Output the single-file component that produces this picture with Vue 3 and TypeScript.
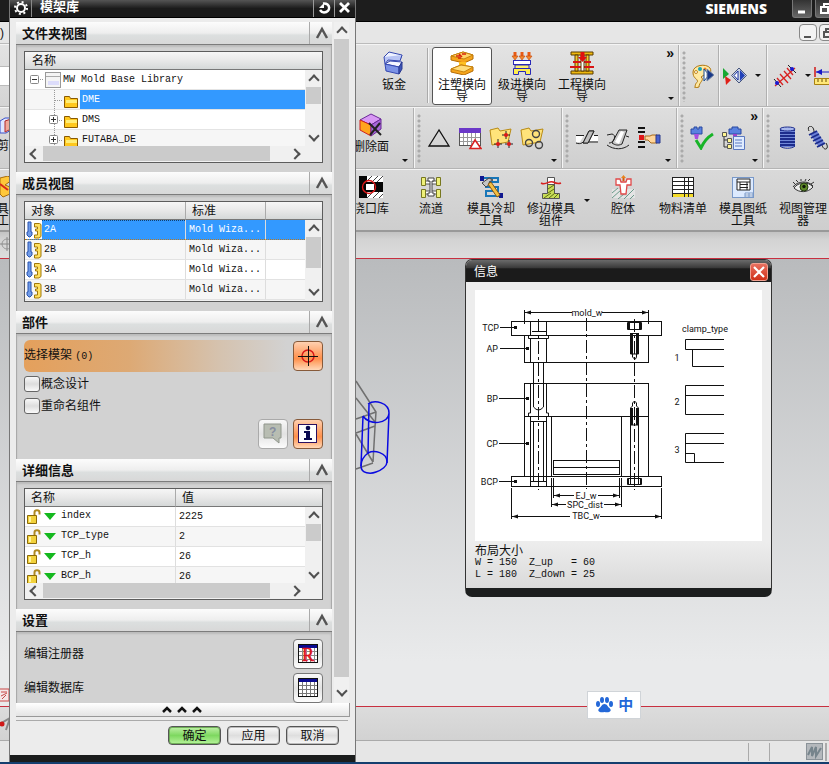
<script setup lang="ts">
import { ref } from 'vue'

interface Tool { icon: string; label: string; active?: boolean }
interface Member { name: string; standard: string }
interface Detail { name: string; value: string }

const icons: Record<string, string> = {
  sheet: '<path d="M2 6 7 1l13 3-2 5-14-2z" fill="#eef2ff" stroke="#3548b0"/><path d="M2 6l1 7 3-4 12 1 2-6" fill="#b8c4f4" stroke="#3548b0"/><path d="M3 13l5-3 12 1-3 5z" fill="#f4f6ff" stroke="#3548b0"/><path d="M3 13l14 3v7L4 20z" fill="#7b92e6" stroke="#3548b0"/><path d="M17 16l3-5v7l-3 5z" fill="#3d55b8" stroke="#2a3a90"/>',
  mold: '<path d="M1 5 13 1l10 3v4l-9 4-13-3z" fill="#f6a51c" stroke="#b46c08"/><path d="M1 5 13 1l10 3-9 4z" fill="#ffd568" stroke="#c8820c"/><path d="M6 5h5M9 3l3 3M8 7h3M12 3h4" stroke="#d8250c" stroke-width="1.6"/><path d="M9 11h7v4H9z" fill="#ffc021"/><path d="M1 18l10-4 12 2v4l-9 4-13-3z" fill="#f6a51c" stroke="#b46c08"/><path d="M1 18l10-4 12 2-9 5z" fill="#ffdc78" stroke="#c8820c"/>',
  prog: '<path d="M5 1v5M12 1v5M19 1v5" stroke="#e85a14" stroke-width="3"/><path d="M2 5h6l-3 4zM9 5h6l-3 4zM16 5h6l-3 4z" fill="#f58a2c" stroke="#c04008" stroke-width=".6"/><rect x="3.500" y="9.500" width="17" height="4" fill="#fff" stroke="#2a2ab8"/><path d="M5 14h14v4H5z" fill="#fff26a" stroke="#2a2ab8"/><path d="M3.500 23.500v-6h17v6h-5v-3h-7v3z" fill="#ffee50" stroke="#2a2ab8"/>',
  eng: '<path d="M1 1h22v3H1zM1 20h22v3H1z" fill="#efb90f" stroke="#5a3c00"/><path d="M5 4h3v16H5zM16 4h3v16h-3z" fill="#f5ca2c" stroke="#5a3c00"/><path d="M3 11h18M0 16h24" stroke="#d81414" stroke-width="2"/><path d="M11 4h3v16h-3z" fill="#fff" stroke="#5a3c00"/><path d="M12.500 1v7" stroke="#e01010" stroke-width="4"/><path d="M8 6h9l-4.500 5z" fill="#e01010"/>',
  palette: '<path d="M2 8C2 1 15-1 19 4c3 5-3 8-6 7l-3 2c4 3-2 5-2 10l-4 1c0-7 4-5 2-8-1-2-4-2-4-8z" fill="#ffe9a3" stroke="#b07810"/><circle cx="9" cy="5" r="2" fill="#17a5b5"/><circle cx="5" cy="8" r="1.500" fill="#fff" stroke="#c08820"/><circle cx="14" cy="5" r="1.500" fill="#e88020"/><path d="M13 5l5 6-5 6z" fill="#fff" stroke="#174a8c"/><path d="M16 5l7 6-7 6z" fill="#183888" stroke="#7b8ba8"/>',
  arrows: '<path d="M0 4l6 6-6 5z" fill="#18a832"/><path d="M2 12l6 4-5 5z" fill="#e02018"/><path d="M16 4l7.500 7.500L16 19l-7.500-7.500z" fill="#c8d0e0" stroke="#46557c"/><path d="M15 7v9l-4-4.500z" fill="#fff" stroke="#1830a0"/><path d="M17 6l5 5.500-5 5.500z" fill="#2040b8"/>',
  measure: '<path d="M2 22 22 4M7 10l8 9M11 7l7 8M4 14l6 7M14 4l6 7" stroke="#d82020" stroke-width="1.300"/><path d="M1 15l7 8M15 1l8 8" stroke="#222"/><circle cx="4" cy="19" r="2" fill="#1818d0"/><circle cx="19" cy="5" r="2" fill="#1818d0"/>',
  ruler: '<path d="M1 3v10" stroke="#d01818" stroke-width="1.500"/><path d="M2 8h22" stroke="#1818c8"/><path d="M2 8l6-3v6z" fill="#1818c8"/><path d="M.500 14.500h23v6H.500z" fill="#ffe878" stroke="#a88010"/><path d="M4 15v3M8 15v3M12 15v3M16 15v3M20 15v3" stroke="#6b5000"/>',
  delface: '<path d="M1 7 12 1l10 5-10 6z" fill="#d898f4" stroke="#6a2898"/><path d="M1 7v10l11 6V12z" fill="#ffa41c" stroke="#d02020"/><path d="M12 12l10-6v10l-10 7z" fill="#a868d8" stroke="#6a2898"/><path d="M10 10l12 12M21 10 11 22" stroke="#222" stroke-width="2"/>',
  triangle: '<path d="M12 4 2 20h20z" fill="none" stroke="#111" stroke-width="1.300"/>',
  tabletri: '<rect x="1.500" y="2.500" width="21" height="17" fill="#fff" stroke="#555"/><path d="M1 2h22v5H1z" fill="#6b38c8"/><path d="M2 11.500h20M2 15.500h20M5.500 7v12M9.500 7v12M13.500 7v12M17.500 7v12" stroke="#999"/><path d="M17 14l-5 8.500h11z" fill="#fff" stroke="#d82020" stroke-width="1.500"/>',
  foldplus: '<path d="M1 4l8-2 2 3 11-2-3 13-16 3z" fill="#ffe37a" stroke="#b88a14"/><path d="M17 5v8M13 9h8M9 13v9M5 18h8M20 14v8M16 18h8" stroke="#222"/><circle cx="17" cy="9" r="2" fill="#e01818"/><circle cx="9" cy="18" r="2" fill="#e01818"/><circle cx="20" cy="18" r="2" fill="#e01818"/>',
  foldring: '<path d="M1 4l8-2 2 3 12-2-3 13-17 3z" fill="#ffe37a" stroke="#b88a14"/><g fill="none" stroke="#444" stroke-width="1.400"><circle cx="16" cy="8" r="3.500"/><circle cx="9" cy="17" r="3.500"/><circle cx="19" cy="19" r="3.500"/></g>',
  surf1: '<path d="M1 9h8l-4 7H1zM16 9h7v6h-9z" fill="#fff"/><path d="M1 9.500h8M19 9.500h4M1 17c5 2 8-1 9-4l4-8h5l-6 12H8" fill="none" stroke="#222"/><path d="M14 5h5l-6 12H8z" fill="#c0c0c0" stroke="#222"/><path d="M14 16h9" stroke="#222"/>',
  surf2: '<path d="M1 19c7 5 16 5 22 0" fill="none" stroke="#222"/><path d="M6 17 13 4h8l-5 14c-4 2-7 1-10-1z" fill="#c8c8c8" stroke="#222"/><path d="M9 16l6-11 3 1-5 12z" fill="#fff"/><path d="M1 9l5-1c5 1 2 9-3 9M20 10l3 1" fill="none" stroke="#222"/>',
  hand: '<path d="M1 2h7M1 6h7M1 16h7M1 21h7" stroke="#111" stroke-width="2"/><path d="M2 9h5v5H2z" fill="#e01818"/><path d="M8 10h5l2-1h5v8h-6l-3-3H8z" fill="#ffd59a" stroke="#a86818"/><path d="M19 9h4v8h-4z" fill="#4b62d0" stroke="#28388a"/>',
  check: '<path d="M1 3h3V1h3v2h2V1h3v7H1z" fill="#5a82e0" stroke="#2848a0"/><path d="M4 8h5l-1 5H5z" fill="#a850e0"/><path d="M6 14l5 8C14 15 18 11 23 8" fill="none" stroke="#18b428" stroke-width="3"/>',
  tree: '<path d="M8 3h3V1h6v2h3v5H8z" fill="#5a82e0" stroke="#2848a0"/><path d="M12 8h4v4h-4z" fill="#a040c8"/><path d="M3 9v12h4M3 14h4" fill="none" stroke="#333"/><path d="M1.500 6.500h4v4h-4zM6.500 12.500h4v4h-4zM6.500 18.500h4v4h-4z" fill="#fff690" stroke="#555"/><path d="M12.500 10.500h11v13h-11z" fill="#e0ecff" stroke="#5a78c0"/><path d="M14 14h7M14 17h7M14 20h7" stroke="#5a78c0"/>',
  spring: '<path d="M5 3h15v18H5z" fill="#7188d8"/><path d="M5 4h15M5 7h15M5 10h15M5 13h15M5 16h15M5 19h15" stroke="#1c2c8c" stroke-width="1.800"/><ellipse cx="12.500" cy="3" rx="7.500" ry="2" fill="#a8b8ec" stroke="#1c2c8c"/><path d="M5 20c3 3 12 3 15 0" fill="none" stroke="#1c2c8c"/>',
  spring2: '<path d="M9 6C9-2 1-1 4 5M17 19c2 7 8 4 4-2" fill="none" stroke="#222"/><path d="M5 8l7-3 8 13-6 3z" fill="#6b80d8"/><path d="M4 9l8-4M6 12l8-4M8 15l8-4M10 18l8-4M12 21l8-4" stroke="#1c2c8c" stroke-width="1.800"/>',
  gate: '<path d="M0 1h8v22H0zM8 7h16v10H8z" fill="#050505"/><path d="M8 1h16v6H8zM8 17h16v6H8z" fill="#fff"/><path d="M8 6l5-5M13 7l6-6M18 7l6-6M8 23l6-6M14 23l6-6M20 23l4-4" stroke="#444"/><path d="M7 9h8v6H7z" fill="#fff"/><circle cx="10" cy="12" r="6.500" fill="none" stroke="#e01818" stroke-width="1.400"/>',
  runner: '<path d="M4 6h16v3H4zM4 16h16v3H4z" fill="#fff" stroke="#555"/><path d="M9 3h6v3h-2v12h2v3H9v-3h2V6H9z" fill="#fff" stroke="#444"/><path d="M2.500 2.500h4v8h-4zM17.500 2.500h4v8h-4zM2.500 14.500h4v8h-4zM17.500 14.500h4v8h-4z" fill="#eef07a" stroke="#777720"/>',
  cool: '<path d="M3 3h16v4H7v5h12v4H7v5h13" fill="none" stroke="#1876b8" stroke-width="2"/><path d="M1 1h4v5H1zM20 18h4v5h-4z" fill="#101890"/><path d="M3 8l7-5 4 2-4 2 1 2-4 3z" fill="#c4c4c4" stroke="#444"/><path d="M9 9l3-2 9 13-3 2z" fill="#f4bf42" stroke="#875810"/>',
  trim: '<path d="M8.500 2.500h7v8h-7z" fill="#fff" stroke="#555"/><path d="M8.500 9.500h7v9h5v5h-17v-5h5z" fill="#c8dc58" stroke="#555"/><path d="M9 14l6-4M9 18l6-4M5 23l7-5M10 23l6-5M15 23l4-4" stroke="#5b6b10"/><path d="M2 8c5 3 8-3 12-1s6 2 8 1" fill="none" stroke="#d82020" stroke-width="1.500"/>',
  cavity: '<path d="M1 14h8v7h7v-7h8v9H1z" fill="#e4e4e4"/><path d="M1 18l6-5M1 23l9-8M7 24l6-5M13 24l10-10M19 24l4-4" stroke="#6a9a8a"/><path d="M5 4h4l1 3h5l1-3h4v6h-4l-1 9h-5l-1-9H5z" fill="#fff" stroke="#e04848" stroke-width="1.300"/><path d="M12.500 6V2" stroke="#d85a10" stroke-width="2"/><path d="M10 3h5l-2.500-3z" fill="#e8821c"/>',
  bom: '<rect x="1.500" y="2.500" width="21" height="19" fill="#fff" stroke="#222"/><path d="M2 18h20v4H2z" fill="#f5dc28"/><path d="M2 6.500h20M2 10.500h20M2 14.500h20M2 18.500h20M13.500 3v19M17.500 3v19" stroke="#222"/>',
  drawing: '<rect x="1.500" y="2.500" width="21" height="20" fill="#dceaff" stroke="#7898c8"/><path d="M6 4h13v11H6z" fill="#fff" stroke="#222"/><path d="M6 7h13M9 9.500h8M9 12.500h8M9 7v8M16 7v8" stroke="#222"/><path d="M14 18h8v4h-8zM14 20h8M18 18v4" fill="#fff" stroke="#7898c8"/>',
  eye: '<path d="M3 13C7 7 17 6 22 12c-5 6-14 6-19 1z" fill="#eee" stroke="#333"/><circle cx="13" cy="12" r="4" fill="#5f8a28" stroke="#253c10"/><circle cx="13" cy="11.500" r="1.700" fill="#101a08"/><path d="M2 12C6 6 17 5 22 11M4 9 2 7M7 7 5 5M10 6V4M14 6l1-2M17 6l2-2M20 9l3-2" fill="none" stroke="#333"/>',
}

const wizardTools: Tool[] = [
  { icon: 'mold', label: '注塑模向导', active: true },
  { icon: 'prog', label: '级进模向导' },
  { icon: 'eng', label: '工程模向导' },
]
const moldLeft: Tool[] = [
  { icon: 'gate', label: '浇口库' },
  { icon: 'runner', label: '流道' },
  { icon: 'cool', label: '模具冷却工具' },
  { icon: 'trim', label: '修边模具组件' },
]
const moldRight: Tool[] = [
  { icon: 'cavity', label: '腔体' },
  { icon: 'bom', label: '物料清单' },
  { icon: 'drawing', label: '模具图纸工具' },
  { icon: 'eye', label: '视图管理器' },
]
const folders = ['DME', 'DMS', 'FUTABA_DE']
const selectedFolder = ref('DME')
const members: Member[] = ['2A', '2B', '3A', '3B'].map((name) => ({ name, standard: 'Mold Wiza...' }))
const selectedMember = ref('2A')
const details: Detail[] = [
  { name: 'index', value: '2225' },
  { name: 'TCP_type', value: '2' },
  { name: 'TCP_h', value: '26' },
  { name: 'BCP_h', value: '26' },
]
const concept = ref(false)
const rename = ref(false)
</script>

<template>
  <div class="desktop">
    <header class="titlebar">
      <span class="brand">SIEMENS</span>
      <button class="winbtn" aria-label="最小化"><svg width="20" height="18"><path d="M5 12h7" stroke="#fff" stroke-width="3" /></svg></button>
      <button class="winbtn" aria-label="还原"><svg width="20" height="18"><path d="M8 7V4h8v7h-3M5 7h7v6H5z" fill="none" stroke="#fff" stroke-width="2" /></svg></button>
    </header>
    <div class="menubar">
      <span class="fragment">)</span>
      <button class="mdibtn" aria-label="最小化"><svg width="16" height="16"><path d="M4 12h7" stroke="#555" stroke-width="2" /></svg></button>
      <button class="mdibtn" aria-label="还原"><svg width="16" height="16"><path d="M6 6V4h7v6M4 7h6v5H4z" fill="none" stroke="#555" stroke-width="2" /></svg></button>
    </div>

    <div class="ribbon top">
      <div class="under wide"><div class="fieldstub"></div></div>
      <button class="tool"><svg viewBox="0 0 24 24" v-html="icons.sheet"></svg><span>钣金</span></button>
      <i class="vsep"></i>
      <button v-for="t in wizardTools" :key="t.icon" class="tool" :class="{ active: t.active }">
        <svg viewBox="0 0 24 24" v-html="icons[t.icon]"></svg><span>{{ t.label }}</span>
      </button>
      <div class="overflow w66"><b>»</b><i class="caret"></i></div>
      <i class="edge"></i><i class="grip"></i>
      <button class="mini w30"><svg viewBox="0 0 24 24" v-html="icons.palette"></svg></button>
      <i class="edge"></i>
      <button class="mini w30"><svg viewBox="0 0 24 24" v-html="icons.arrows"></svg></button>
      <i class="drop"><i class="caret"></i></i>
      <i class="edge"></i>
      <button class="mini w34"><svg viewBox="0 0 24 24" v-html="icons.measure"></svg></button>
      <i class="drop narrow"><i class="caret"></i></i>
      <button class="mini w24"><svg viewBox="0 0 24 24" v-html="icons.ruler"></svg></button>
    </div>

    <div class="ribbon mid">
      <div class="under near">
        <svg width="12" height="18"><path d="M0 4l5-3 6 0v12l-5 3H0z" fill="#dfe6ff" stroke="#3a50c8" /><path d="M5 4l6-2v10l-6 3z" fill="#f0a898" stroke="#b02828" /></svg>
        <span class="fragment">剪</span>
      </div>
      <button class="tool"><svg viewBox="0 0 24 24" v-html="icons.delface"></svg><span>删除面</span></button>
      <div class="overflow w12"><i class="caret"></i></div>
      <i class="edge"></i><i class="grip"></i>
      <button v-for="n in ['triangle', 'tabletri', 'foldplus', 'foldring']" :key="n" class="mini"><svg viewBox="0 0 24 24" v-html="icons[n]"></svg></button>
      <div class="overflow w14"><i class="caret"></i></div>
      <i class="edge"></i><i class="grip"></i>
      <button v-for="n in ['surf1', 'surf2', 'hand']" :key="n" class="mini"><svg viewBox="0 0 24 24" v-html="icons[n]"></svg></button>
      <div class="overflow w12"><i class="caret"></i></div>
      <i class="edge"></i><i class="grip"></i>
      <button v-for="n in ['check', 'tree']" :key="n" class="mini"><svg viewBox="0 0 24 24" v-html="icons[n]"></svg></button>
      <div class="overflow w14"><b>»</b><i class="caret"></i></div>
      <i class="edge"></i><i class="grip"></i>
      <button v-for="n in ['spring', 'spring2']" :key="n" class="mini w30"><svg viewBox="0 0 24 24" v-html="icons[n]"></svg></button>
    </div>

    <div class="ribbon low">
      <div class="under near">
        <svg width="14" height="22"><path d="M0 2l8-2 4 4-7 5 5 2v7l-7 3-3-3z" fill="#ffc83a" stroke="#a86c0c" /><path d="M0 8l8 6" stroke="#d82818" stroke-width="2" /></svg>
        <span class="fragment">具<br />工</span>
      </div>
      <button v-for="t in moldLeft" :key="t.icon" class="tool"><svg viewBox="0 0 24 24" v-html="icons[t.icon]"></svg><span>{{ t.label }}</span></button>
      <i class="drop"><i class="caret"></i></i>
      <button v-for="t in moldRight" :key="t.icon" class="tool"><svg viewBox="0 0 24 24" v-html="icons[t.icon]"></svg><span>{{ t.label }}</span></button>
    </div>
    <div class="selectbar">
      <svg width="14" height="14"><circle cx="7" cy="7" r="5" fill="none" stroke="#999" /><path d="M7 0v14M0 7h14" stroke="#888" /></svg>
    </div>

    <main class="viewport">
      <svg class="stampmark" width="14" height="14"><rect x="-3" y="1" width="12" height="12" fill="#f5e8e8" stroke="#c84848" /><path d="M1 4h6M1 8l6-3M2 11l4-4" stroke="#c84848" /></svg>
    </main>
    <svg class="wire" width="44" height="110" viewBox="355 375 44 110" fill="none">
      <g stroke="#707070" stroke-width="1.500"><path d="M356 381l20 31-1 15-2 35M356 398l19 24M356 419l20-7M356 433l19-7M356 434l17 28M356 469l17-6" /></g>
      <g stroke="#0a0ae0" stroke-width="1.500"><path d="M368 404c7-5 21-1 21 9 0 11-20 13-26 3M389 413l-2 50M363 416l-2 50M369 404l-1 50" /><path d="M361 466c0 8 10 8 15 6 6-2 11-6 11-10 0-10-13-12-19-9-4 3-7 8-7 13z" /></g>
    </svg>
    <div class="statusbar">
      <svg width="12" height="18"><path d="M0 9l10-6-4 12" fill="none" stroke="#888" stroke-width="2" /><circle cx="2" cy="9" r="2.500" fill="#d01818" /></svg>
    </div>
    <footer class="footer">
      <i></i><i></i>
      <svg width="17" height="17"><rect x=".5" y=".5" width="16" height="16" fill="#b4b8bc" stroke="#8a9298" /><path d="M2 12l4-8v9l4-9v9l5-8" fill="none" stroke="#76848c" stroke-width="2" /></svg>
      <i></i>
    </footer>
    <div class="taskline"></div>

    <section class="dialog" aria-label="模架库">
      <header class="dlgtitle">
        <svg width="21" height="17"><circle cx="11" cy="8" r="4" fill="none" stroke="#fff" stroke-width="2" /><circle cx="11" cy="8" r="6" fill="none" stroke="#fff" stroke-width="2" stroke-dasharray="2 2.700" /></svg>
        <h1>模架库</h1>
        <button aria-label="重置"><svg width="20" height="17"><path d="M9 3.500c8-1 8 9 1 9-2 0-3-1-4-2.500" fill="none" stroke="#fff" stroke-width="2.500" /><path d="M10 3v5H5z" fill="#fff" /></svg></button>
        <button aria-label="关闭"><svg width="20" height="17"><path d="M5 3l9 9M14 3l-9 9" stroke="#fff" stroke-width="2.800" /></svg></button>
      </header>

      <div class="dlgmain">
        <div class="sections">
          <div class="section">
            <h2>文件夹视图<button aria-label="折叠"><svg width="22" height="20"><path d="M7 15l5-9 5 9" fill="none" stroke="#555" stroke-width="2.500" /></svg></button></h2>
            <div class="secbody">
              <div class="listbox">
                <div class="colhead">名称</div>
                <div class="treewrap">
                  <ul class="tree">
                    <li class="root">
                      <svg width="38" height="20"><rect x="5.500" y="5.500" width="8" height="8" rx="1" fill="#fff" stroke="#888" /><path d="M7 9.500h5" stroke="#333" /><path d="M15 9.500h4" stroke="#999" stroke-dasharray="1 1" /><rect x="20.500" y="2.500" width="15" height="15" fill="#f4f4f4" stroke="#999" /><path d="M21 6.500h14" stroke="#aaa" /><path d="M23 11h11v4H23z" fill="#dcdcfa" /></svg>
                      <span>MW Mold Base Library</span>
                    </li>
                    <li v-for="(f, i) in folders" :key="f" :class="{ selected: f === selectedFolder }" @click="selectedFolder = f">
                      <svg width="55" height="20"><path d="M29.500 0v20M30 10.500h8" stroke="#999" stroke-dasharray="1 1" /><g v-if="i > 0"><rect x="24.500" y="5.500" width="8" height="8" rx="1" fill="#fff" stroke="#888" /><path d="M26 9.500h5M28.500 7v5" stroke="#333" /></g><path d="M39.500 6.500h5l1 2h7v9h-13z" fill="#ffc81e" stroke="#8a5a00" /><path d="M41 10h11v3H41z" fill="#ffee78" /></svg>
                      <span>{{ f }}</span>
                    </li>
                  </ul>
                  <div class="vbar"><i class="up"></i><i class="thumb h17"></i><i class="down"></i></div>
                </div>
                <div class="hbar"><i class="left"></i><i class="thumb"></i><i class="right"></i></div>
              </div>
            </div>
          </div>

          <div class="section">
            <h2>成员视图<button aria-label="折叠"><svg width="22" height="20"><path d="M7 15l5-9 5 9" fill="none" stroke="#555" stroke-width="2.500" /></svg></button></h2>
            <div class="secbody">
              <div class="listbox">
                <table>
                  <colgroup><col class="c160" /><col class="c80" /><col /><col class="cbar" /></colgroup>
                  <thead><tr><th>对象</th><th>标准</th><th></th><th class="plain"></th></tr></thead>
                  <tbody>
                    <tr v-for="(m, i) in members" :key="m.name" :class="{ selected: m.name === selectedMember }" @click="selectedMember = m.name">
                      <td class="first"><div class="cell"><svg width="17" height="20"><path d="M3 2h3v10h1v3l-2 2H4l-2-2v-3h1z" fill="#6f9be8" stroke="#2a55b0" /><path d="M9.500 3.500h5l1.500 1v12l-2 1.500H9.500v-3h3v-4h-2v-2h2v-2h-3z" fill="#ffe060" stroke="#a07808" /></svg><span>{{ m.name }}</span></div></td>
                      <td>{{ m.standard }}</td><td></td>
                      <td v-if="i === 0" rowspan="4" class="barcell"><div class="vbar tall"><i class="up"></i><i class="thumb h31"></i><i class="down"></i></div></td>
                    </tr>
                  </tbody>
                </table>
              </div>
            </div>
          </div>

          <div class="section">
            <h2>部件<button aria-label="折叠"><svg width="22" height="20"><path d="M7 15l5-9 5 9" fill="none" stroke="#555" stroke-width="2.500" /></svg></button></h2>
            <div class="secbody parts">
              <div class="pick">
                <span>选择模架 <small>(0)</small></span>
                <button class="sq hot" aria-label="选择模架"><svg width="22" height="22"><circle cx="11" cy="11" r="6" fill="none" stroke="#d81818" stroke-width="1.500" /><path d="M11.500 1v20M1 11.500h20" stroke="#111" /></svg></button>
              </div>
              <label><input v-model="concept" type="checkbox" />概念设计</label>
              <label><input v-model="rename" type="checkbox" />重命名组件</label>
              <div class="sqrow">
                <button class="sq off" aria-label="帮助" disabled><svg width="22" height="24"><path d="M2 2h17v14h-2v5l-6-5H2z" fill="#b8bdb2" stroke="#90968c" /><text x="7" y="14" font-size="12" font-weight="bold" fill="#878da0">?</text></svg></button>
                <button class="sq hot" aria-label="信息"><svg width="22" height="22"><rect x="1.500" y="1.500" width="18" height="18" fill="#fff" stroke="#2a1060" /><path d="M7 8h6v7h2v2H7v-2h2v-5H7z" fill="#0a0a50" /><circle cx="11" cy="5" r="2.300" fill="#0a0a50" /></svg></button>
              </div>
            </div>
          </div>

          <div class="section">
            <h2>详细信息<button aria-label="折叠"><svg width="22" height="20"><path d="M7 15l5-9 5 9" fill="none" stroke="#555" stroke-width="2.500" /></svg></button></h2>
            <div class="secbody">
              <div class="listbox">
                <div class="clip">
                  <table class="details">
                    <colgroup><col class="c150" /><col /><col class="cbar" /></colgroup>
                    <thead><tr><th>名称</th><th>值</th><th class="plain"></th></tr></thead>
                    <tbody>
                      <tr v-for="(d, i) in details" :key="d.name">
                        <td class="first"><div class="cell"><svg width="34" height="20"><path d="M9.500 9V5.500c0-3 5-3 5 0v2" fill="none" stroke="#b08a20" stroke-width="2" /><path d="M2.500 8.500h9v8h-9z" fill="#f2d23c" stroke="#8c6b08" /><path d="M5 10v5" stroke="#fff3a0" stroke-width="2" /><path d="M19 6h12l-6 7z" fill="#14b81e" /></svg><span>{{ d.name }}</span></div></td>
                        <td>{{ d.value }}</td>
                        <td v-if="i === 0" rowspan="4" class="barcell"><div class="vbar"><i class="up"></i><i class="thumb h17"></i><i class="down"></i></div></td>
                      </tr>
                    </tbody>
                  </table>
                </div>
                <div class="hbar"><i class="left"></i><i class="thumb"></i><i class="right"></i></div>
              </div>
            </div>
          </div>

          <div class="section last">
            <h2>设置<button aria-label="折叠"><svg width="22" height="20"><path d="M7 15l5-9 5 9" fill="none" stroke="#555" stroke-width="2.500" /></svg></button></h2>
            <div class="secbody settings">
              <div class="setrow"><span>编辑注册器</span><button class="sq" aria-label="编辑注册器"><svg width="22" height="22"><rect x="1.500" y="1.500" width="19" height="18" fill="#fff" stroke="#111" /><path d="M2 2h18v3H2z" fill="#0a0a90" /><path d="M2 8.500h18M2 12.500h18M2 16.500h18M5.500 5v14M9.500 5v14M13.500 5v14M17.500 5v14" stroke="#888" /><text x="5" y="18" font-family="Liberation Serif, serif" font-size="18" fill="#e01020" stroke="#e01020" stroke-width=".5">R</text></svg></button></div>
              <div class="setrow"><span>编辑数据库</span><button class="sq" aria-label="编辑数据库"><svg width="22" height="22"><rect x="1.500" y="1.500" width="19" height="18" fill="#fff" stroke="#111" /><path d="M2 2h18v3H2z" fill="#0a0a90" /><path d="M2 8.500h18M2 12.500h18M2 16.500h18M5.500 5v14M9.500 5v14M13.500 5v14M17.500 5v14" stroke="#777" /></svg></button></div>
            </div>
          </div>
        </div>
        <div class="vbar main"><i class="up"></i><i class="thumb grow"></i><i class="down"></i></div>
      </div>

      <button class="collapse" aria-label="收起"><svg width="44" height="9"><path d="M2 7l4-4 4 4M17 7l4-4 4 4M32 7l4-4 4 4" fill="none" stroke="#111" stroke-width="2.500" /></svg></button>
      <div class="actions">
        <button class="ok">确定</button><button>应用</button><button>取消</button>
      </div>
      <div class="dlgbase"></div>
    </section>

    <section class="info" aria-label="信息">
      <header><span>信息</span><button aria-label="关闭"><svg width="16" height="16"><path d="M3 3l10 10M13 3 3 13" stroke="#fff" stroke-width="2.200" /></svg></button></header>
      <div class="infobody">
        <svg class="diagram" viewBox="475 290 287 251" fill="none" stroke="#111" stroke-width="1">
          <rect x="475" y="290" width="287" height="251" fill="#fff" stroke="none" />
          <path d="M524.500 310v14M648.500 310v14M525 312.500h47M602 312.500h46" />
          <rect x="511.500" y="321.500" width="150" height="14" />
          <rect x="524.500" y="335.500" width="124" height="27" />
          <rect x="524.500" y="383.500" width="124" height="33" />
          <path d="M524.500 416v60M648.500 416v60M551.500 416v60M621.500 416v60" />
          <rect x="511.500" y="476.500" width="150" height="10" />
          <rect x="553.500" y="460.500" width="66" height="14" /><path d="M553 467.500h66" />
          <path d="M586.500 318v171M538.500 319v171M634.500 319v171" stroke-dasharray="13 3 3 3" />
          <path d="M530.500 321v14M546.500 321v14M532 331.500h14M528.500 335.500h20v3h-20zM530.500 338v24M546.500 338v24M533.500 362v45q5 6 10 0V362M530.500 383v30h-2v3M546.500 383v30h2v3M530.500 416.500h16v70h-16zM530.500 421.500h16M533.500 421v60M543.500 421v60M530 481.500h16" />
          <path d="M627.500 322.500h14v7h-14zM629.500 322v7M639.500 322v7M630.500 333v21h8v-21M632.500 354v3l2 2h1l1-2v-3M630.500 333.500h8M632.500 333v21M636.500 333v21" />
          <path d="M631.500 333v21M637.500 333v21M628.500 322v7M640.500 322v7M631.500 408v17M637.500 408v17M628.500 478v6M640.500 478v6" />
          <path d="M630.500 408v17h8v-17l-2-2v-3l-2-2-2 2v3zM632.500 408v17M636.500 408v17M627.500 478.500h14v6h-14zM630.500 478v6M638.500 478v6" />
          <path d="M630.500 425v53M638.500 425v53" />
          <path d="M500 327.500h15M500 348.500h27M499 398.500h28M499 443.500h28M499 481.500h16" />
          <path d="M553.500 478v20M619.500 478v20M551.500 478v29M621.500 478v29M511.500 488v31M661.500 488v31" />
          <path d="M554 495.500h20M598 495.500h21M552 504.500h14M604 504.500h17M512 516.500h58M600 516.500h61" />
          <g fill="#111" stroke="none">
            <path d="M525 312.500l6-2v4zM648 312.500l-6-2v4zM554 495.500l6-2v4zM619 495.500l-6-2v4zM552 504.500l6-2v4zM621 504.500l-6-2v4zM512 516.500l6-2v4zM661 516.500l-6-2v4z" />
            <path d="M514 326h3v3h-3zM526 347h3v3h-3zM526 397h3v3h-3zM526 442h3v3h-3zM514 480h3v3h-3z" />
          </g>
          <path d="M724 339.500h-38.500v10H724M692.500 349v17.500H724M724 385.500h-38.500v29H724M685 395.500h39M724 433.500h-38.500v29H724M685 443.500h39M685 453.500h9.500v9" />
          <g fill="#111" stroke="none" font-family="Roboto, sans-serif" font-size="9">
            <text x="587" y="316" text-anchor="middle">mold_w</text>
            <g text-anchor="end"><text x="499" y="331">TCP</text><text x="498" y="352">AP</text><text x="498" y="402">BP</text><text x="498" y="447">CP</text><text x="498" y="485">BCP</text></g>
            <g text-anchor="middle"><text x="586" y="499">EJ_w</text><text x="585" y="508">SPC_dist</text><text x="586" y="519">TBC_w</text><text x="705" y="332">clamp_type</text><text x="677" y="361">1</text><text x="677" y="405">2</text><text x="677" y="453">3</text></g>
          </g>
        </svg>
        <p>布局大小</p>
        <pre>W = 150  Z_up   = 60
L = 180  Z_down = 25</pre>
      </div>
    </section>

    <div class="ime">
      <svg width="18" height="18" fill="#2468d8"><ellipse cx="3" cy="8" rx="2" ry="3" /><ellipse cx="7" cy="4" rx="2" ry="3" /><ellipse cx="12" cy="4" rx="2" ry="3" /><ellipse cx="16" cy="8" rx="2" ry="3" /><path d="M9.500 8c3 0 3 3 5 4 3 3 0 5-5 4-5 1-8-1-5-4 2-1 2-4 5-4z" /></svg>
      <b>中</b>
    </div>
  </div>
</template>

<style>
body { overflow: hidden; }
</style>

<style scoped>
* { box-sizing: border-box; }
.desktop { position: relative; display: flex; flex-direction: column; height: 100vh; overflow: hidden; background: #e4e5e6; color: #111; font-family: "Liberation Sans", "Noto Sans CJK SC", sans-serif; font-size: 12px; line-height: 12px; }
button { padding: 0; border: 0; background: none; color: inherit; font: inherit; }
i { font-style: normal; flex: none; }
svg { display: block; flex: none; }
.titlebar { display: flex; justify-content: flex-end; align-items: flex-start; flex: none; height: 22px; margin-right: -6px; background: #1d1d1d; border-bottom: 1px solid #000; }
.brand { margin: 2px 25px 0 0; color: #fff; font: 800 14px/14px "Open Sans", sans-serif; }
.winbtn { width: 20px; height: 18px; margin-right: 3px; border: 1px solid #777; border-top: 0; border-radius: 0 0 3px 3px; background: linear-gradient(#333, #666); overflow: hidden; }
.winbtn:last-child { margin-right: 0; }
.menubar { display: flex; align-items: center; gap: 2px; flex: none; height: 22px; margin-right: -8px; background: #e6e6e6; border-bottom: 1px solid #bbb; }
.menubar .fragment { margin-right: auto; }
.mdibtn { width: 18px; height: 17px; border: 1px solid #888; border-radius: 4px; background: #f3f3f3; overflow: hidden; }
.ribbon { display: flex; flex: none; overflow: hidden; background: linear-gradient(#e3e3e3, #d4d4d4); border-top: 1px solid #f4f4f4; border-bottom: 1px solid #b4b4b4; }
.top { height: 63px; }
.mid { height: 62px; background: linear-gradient(#dedede, #cfcfcf); }
.low { height: 63px; background: linear-gradient(#d9d9d9, #cecece); border-bottom: 2px solid #999; }
.under { flex: none; overflow: hidden; }
.wide { width: 364px; }
.near { width: 341px; padding-top: 6px; }
.mid .near svg { margin-top: 3px; }
.fragment { display: block; margin-left: -3px; }
.menubar .fragment { margin-left: 0; }
.near .fragment { margin-top: 5px; }
.fieldstub { width: 12px; height: 20px; margin-top: 21px; background: #fff; border: 1px solid #bbb; border-left: 0; }
.tool { display: flex; flex-direction: column; align-items: center; gap: 4px; flex: none; width: 60px; margin: 2px 0 1px; padding-top: 3px; border: 1px solid transparent; border-radius: 3px; }
.tool svg { width: 24px; height: 24px; }
.tool span { width: 50px; text-align: center; }
.tool.active { background: #fff; border-color: #555; }
.low .tool, .mid .tool { padding-top: 2px; }
.vsep { width: 8px; margin: 3px 0; background: linear-gradient(90deg, transparent 3px, #aaa 3px, #aaa 4px, #f5f5f5 4px, #f5f5f5 5px, transparent 5px); }
.edge { width: 2px; background: linear-gradient(90deg, #b0b0b0 50%, #f5f5f5 50%); }
.grip { width: 6px; margin: 6px 0 4px 2px; background: radial-gradient(circle at 2px 2px, #aaa 1px, transparent 2px) 0 0 / 6px 5px; }
.overflow { display: flex; flex-direction: column; justify-content: space-between; align-items: flex-end; flex: none; padding: 2px 4px 6px 0; }
.overflow b { font-size: 14px; }
.overflow .caret { margin-top: auto; }
.w66 { width: 66px; }
.w12 { width: 12px; padding-right: 5px; }
.w14 { width: 14px; padding-right: 4px; }
.caret { width: 0; height: 0; border: 3px solid transparent; border-top-color: #111; border-bottom: 0; }
.drop { display: flex; align-items: center; justify-content: center; width: 12px; }
.top .drop { width: 16px; }
.top .drop.narrow { width: 12px; }
.mini { display: flex; align-items: center; justify-content: center; flex: none; width: 31px; }
.mini svg { width: 24px; height: 24px; }
.w30 { width: 30px; }
.w34 { width: 34px; }
.w24 { width: 24px; }
.selectbar { flex: none; height: 27px; padding-top: 5px; background: linear-gradient(#c3c3c3, #d3d3d3 30%, #dcdcdc); border-bottom: 1px solid #c83040; }
.viewport { display: flex; align-items: flex-end; flex: 1; padding-bottom: 4px; background: linear-gradient(#b9bbbd, #e9eaeb 90%); border-bottom: 1px solid #c83040; }
.wire { position: absolute; left: 355px; top: 375px; }
.statusbar { display: flex; align-items: center; flex: none; height: 34px; background: linear-gradient(#dcdcdc, #d2d2d2); border-bottom: 1px solid #aaa; }
.footer { display: flex; justify-content: flex-end; align-items: center; gap: 2px; flex: none; height: 21px; padding-right: 2px; background: #e6e6e6; }
.footer i { width: 1px; height: 18px; background: #aaa; }
.footer i:first-child { margin-right: 18px; }
.footer i:nth-child(2) { margin-right: 34px; }
.footer i:last-child { width: 2px; }
.taskline { flex: none; height: 2px; background: #143e6e; }

.dialog { position: absolute; left: 9px; top: 0; display: flex; flex-direction: column; width: 347px; height: 762px; background: #ececec; border: solid #777; border-width: 0 1px; }
.dlgtitle { display: flex; flex: none; height: 18px; background: linear-gradient(#555, #1b1b1b 50%); border-bottom: 1px solid #000; color: #fff; }
.dlgtitle h1 { flex: 1; margin: 0; padding-left: 8px; border-left: 1px solid #888; font-size: 13px; line-height: 13px; }
.dlgtitle button { width: 21px; border-left: 1px solid #999; }
.dlgmain { display: flex; gap: 2px; flex: 1; min-height: 0; padding: 4px 6px 0; }
.sections { flex: 1; overflow: hidden; }
.section h2 { display: flex; align-items: center; height: 23px; margin: 0; padding-left: 6px; background: linear-gradient(#fcfcfc, #eee 50%, #dcdfdf 60%, #d8d8d8); border-bottom: 1px solid #7c7c7c; font-size: 13px; line-height: 13px; }
.section h2 button { width: 23px; height: 22px; margin-left: auto; border-left: 1px solid #aaa; }
.secbody { padding: 6px 8px 9px 7px; background: #d2d2d2; border: solid #aaa; border-width: 0 1px; box-shadow: inset 0 2px 2px #bbb; }
.listbox { border: 1px solid #5c5c5c; background: #f1f1f1; padding-bottom: 1px; }
.colhead { height: 18px; padding: 3px 7px; background: linear-gradient(#f6f6f6, #e8e8e8 50%, #d5d8d8); border-bottom: 1px solid #777; }
.treewrap { display: flex; height: 76px; overflow: hidden; }
.tree { flex: 1; height: 76px; margin: 0; padding: 0; overflow: hidden; list-style: none; background: #fff; font: 10px/19px "Liberation Mono", monospace; }
.tree li { display: flex; height: 20px; border-bottom: 1px solid #e4e4e4; }
.tree li:nth-child(even) { background: #f6f6f6; }
.tree span { flex: 1; padding-left: 2px; }
.tree .root span { padding-left: 0; }
.tree .selected span { background: #3399ff; color: #fff; }
.vbar { display: flex; flex-direction: column; flex: none; width: 17px; height: 76px; padding: 0 1px; background: #f0f0f0; }
.vbar.tall { height: 80px; }
.vbar.main { width: 15px; height: auto; padding: 0; }
.thumb { background: #cbcbcb; }
.h17 { height: 17px; }
.h31 { height: 31px; }
.grow { flex: 1; }
.up, .down, .left, .right { display: grid; place-items: center; width: 15px; height: 17px; }
.down { margin-top: auto; }
.main .down { height: 26px; padding-top: 6px; }
.up::before, .down::before, .left::before, .right::before { content: ""; width: 6px; height: 6px; border: solid #505050; border-width: 2px 0 0 2px; }
.up::before { transform: translateY(1px) rotate(45deg); }
.down::before { transform: translateY(-2px) rotate(225deg); }
.left::before { transform: rotate(-45deg); }
.right::before { transform: rotate(135deg); }
.hbar { display: flex; height: 15px; padding: 0 19px 0 1px; background: #f0f0f0; }
.hbar .left, .hbar .right { width: 17px; height: 15px; }
.hbar .thumb { width: 227px; }
.hbar .right { margin-left: auto; }
table { width: 100%; table-layout: fixed; border-collapse: separate; border-spacing: 0; }
.c160 { width: 160px; }
.c150 { width: 150px; }
.c80 { width: 80px; }
.cbar { width: 17px; }
th { height: 18px; padding: 0 0 0 6px; background: linear-gradient(#f6f6f6, #e8e8e8 50%, #d5d8d8); border-bottom: 1px solid #777; border-left: 1px solid #aaa; font-weight: normal; text-align: left; }
th:first-child, th.plain { border-left: 0; }
td { height: 20px; padding: 0 0 0 3px; border-bottom: 1px solid #e2e2e2; border-left: 1px solid #ddd; background: #fff; font: 10px/19px "Liberation Mono", monospace; overflow: hidden; white-space: nowrap; }
tbody tr:nth-child(even) td { background: #f6f6f6; }
td.first { padding: 0; border-left: 0; }
.cell { display: flex; height: 19px; overflow: hidden; }
.cell span { flex: 1; padding-left: 2px; }
.selected td:not(.barcell) { background: #3399ff; border-bottom: 1px dotted #b87820; color: #fff; }
.selected .first .cell svg { background: #fff; }
.selected .cell span { border-top: 1px dotted #104070; line-height: 17px; }
td.barcell { padding: 0; border: 0; vertical-align: top; background: #f0f0f0; }
.details td { line-height: 17px; }
.clip { height: 94px; overflow: hidden; }
.parts { display: flex; flex-direction: column; }
.pick { display: flex; align-items: center; height: 32px; border-radius: 6px; background: linear-gradient(90deg, #e4a05c, #dda974 35%, #d5c2ae 65%, #d2d2d2 88%); }
.pick span { flex: 1; }
.pick small { font: 10px/12px "Liberation Mono", monospace; }
.parts label { display: flex; align-items: center; gap: 1px; height: 16px; margin-top: 4px; }
.parts label + label { margin-top: 6px; }
input { appearance: none; width: 16px; height: 16px; margin: 0; border: 1px solid #666; border-radius: 3px; background: linear-gradient(#f8f8f8, #ddd 50%, #fafafa); }
input:checked { background: #88a8d8; }
.sq { display: grid; place-items: center; flex: none; width: 30px; height: 30px; border: 1px solid #777; border-radius: 4px; background: linear-gradient(#f8f8f8, #e2e2e2 50%, #fcfcfc); }
.sq.hot { border-color: #875a3a; background: linear-gradient(#ffd0b0, #ff9e62 45%, #ff914c 60%, #ffd8b8); }
.sq.off { border-color: #aaa; }
.sqrow { display: flex; justify-content: flex-end; gap: 5px; margin: 5px 0 1px; }
.settings { display: flex; flex-direction: column; gap: 4px; padding-top: 7px; }
.setrow { display: flex; justify-content: space-between; align-items: center; }
.collapse { display: grid; place-items: center; flex: none; height: 14px; margin: 0 5px 0 6px; background: linear-gradient(#fff, #e4e4e4); border: solid #999; border-width: 0 1px 1px 0; }
.actions { display: flex; justify-content: flex-end; gap: 6px; flex: none; margin: 3px 7px 0 6px; padding: 5px 9px 10px; border-top: 1px solid #aaa; }
.actions button { width: 53px; height: 19px; border: 1px solid #555; border-radius: 4px; background: linear-gradient(#fafafa, #dedede 50%, #f8f8f8); box-shadow: inset 0 0 0 1px #bbb; }
.actions .ok { background: linear-gradient(#c0f0a8, #7ed860 50%, #b8f49c); box-shadow: inset 0 0 0 1px #70b058; }
.dlgbase { flex: none; height: 7px; background: #1a1c1c; }

.info { position: absolute; left: 465px; top: 259px; display: flex; flex-direction: column; width: 307px; border-radius: 7px; overflow: hidden; border: 1px solid #333; border-bottom: 9px solid #1c1e1e; background: #ececec; }
.info header { display: flex; justify-content: space-between; align-items: center; height: 22px; padding: 2px 3px 0 8px; background: linear-gradient(#6a6a6a, #3a3a3a 35%, #1b1b1b 40%); color: #fff; }
.info header button { width: 18px; height: 18px; border: 1px solid #f0a090; border-radius: 3px; background: linear-gradient(#e87060, #d03018); }
.infobody { padding: 8px 9px 7px; background: linear-gradient(#ededed 85%, #dadada); }
.diagram { width: 100%; height: auto; }
.info p { margin: 4px 0 0; }
.info pre { margin: 0; font: 10px/12px "Liberation Mono", monospace; }
.ime { position: absolute; left: 587px; top: 691px; display: flex; align-items: center; justify-content: space-around; width: 54px; height: 28px; padding: 0 4px; background: #fff; border: 1px solid #d0d4d8; color: #2468d8; font-size: 15px; }
</style>
